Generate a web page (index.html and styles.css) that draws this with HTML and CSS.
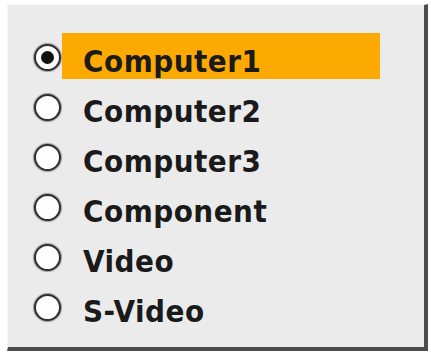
FILE: index.html
```html
<!DOCTYPE html>
<html>
<head>
<meta charset="utf-8">
<link rel="stylesheet" href="styles.css">
</head>
<body>
<div class="panel">
  <ul class="list">
    <li class="row"><span class="radio checked"></span><span class="label selected">Computer1</span></li>
    <li class="row"><span class="radio"></span><span class="label">Computer2</span></li>
    <li class="row"><span class="radio"></span><span class="label">Computer3</span></li>
    <li class="row"><span class="radio"></span><span class="label">Component</span></li>
    <li class="row"><span class="radio"></span><span class="label">Video</span></li>
    <li class="row"><span class="radio"></span><span class="label">S-Video</span></li>
  </ul>
</div>
</body>
</html>
```
FILE: styles.css
```css
html, body {
  margin: 0;
  padding: 0;
  background: #ffffff;
}
.panel {
  box-sizing: border-box;
  margin: 4px 0 0 7px;
  width: 421px;
  height: 347px;
  background: #ebebeb;
  border-top: 1px solid #f6f6f6;
  border-left: 1px solid #f6f6f6;
  border-right: 4px solid #4c4c4c;
  border-bottom: 4px solid #4c4c4c;
  padding: 28px 0 0 26px;
}
.list {
  list-style: none;
  margin: 0;
  padding: 0;
}
.row {
  display: flex;
  align-items: flex-start;
  height: 50px;
}
.radio {
  box-sizing: border-box;
  flex: none;
  width: 27px;
  height: 27px;
  margin-top: 11px;
  border: 2px solid #2e2e2e;
  border-radius: 50%;
  background: #fdfdfd;
  box-shadow: 0 0 1px 1px #9a9a9a;
  display: flex;
  align-items: center;
  justify-content: center;
}
.radio.checked::after {
  content: "";
  width: 13px;
  height: 13px;
  border-radius: 50%;
  background: #111;
}
.label {
  box-sizing: border-box;
  margin-left: 1px;
  width: 318px;
  height: 46px;
  padding: 11px 0 0 21px;
  font-family: "DejaVu Sans Condensed", "DejaVu Sans", sans-serif;
  font-weight: bold;
  font-size: 31px;
  letter-spacing: 0.5px;
  line-height: 34px;
  color: #1a1a1a;
  white-space: nowrap;
}
.label.selected {
  background: #fdaa00;
}
```
